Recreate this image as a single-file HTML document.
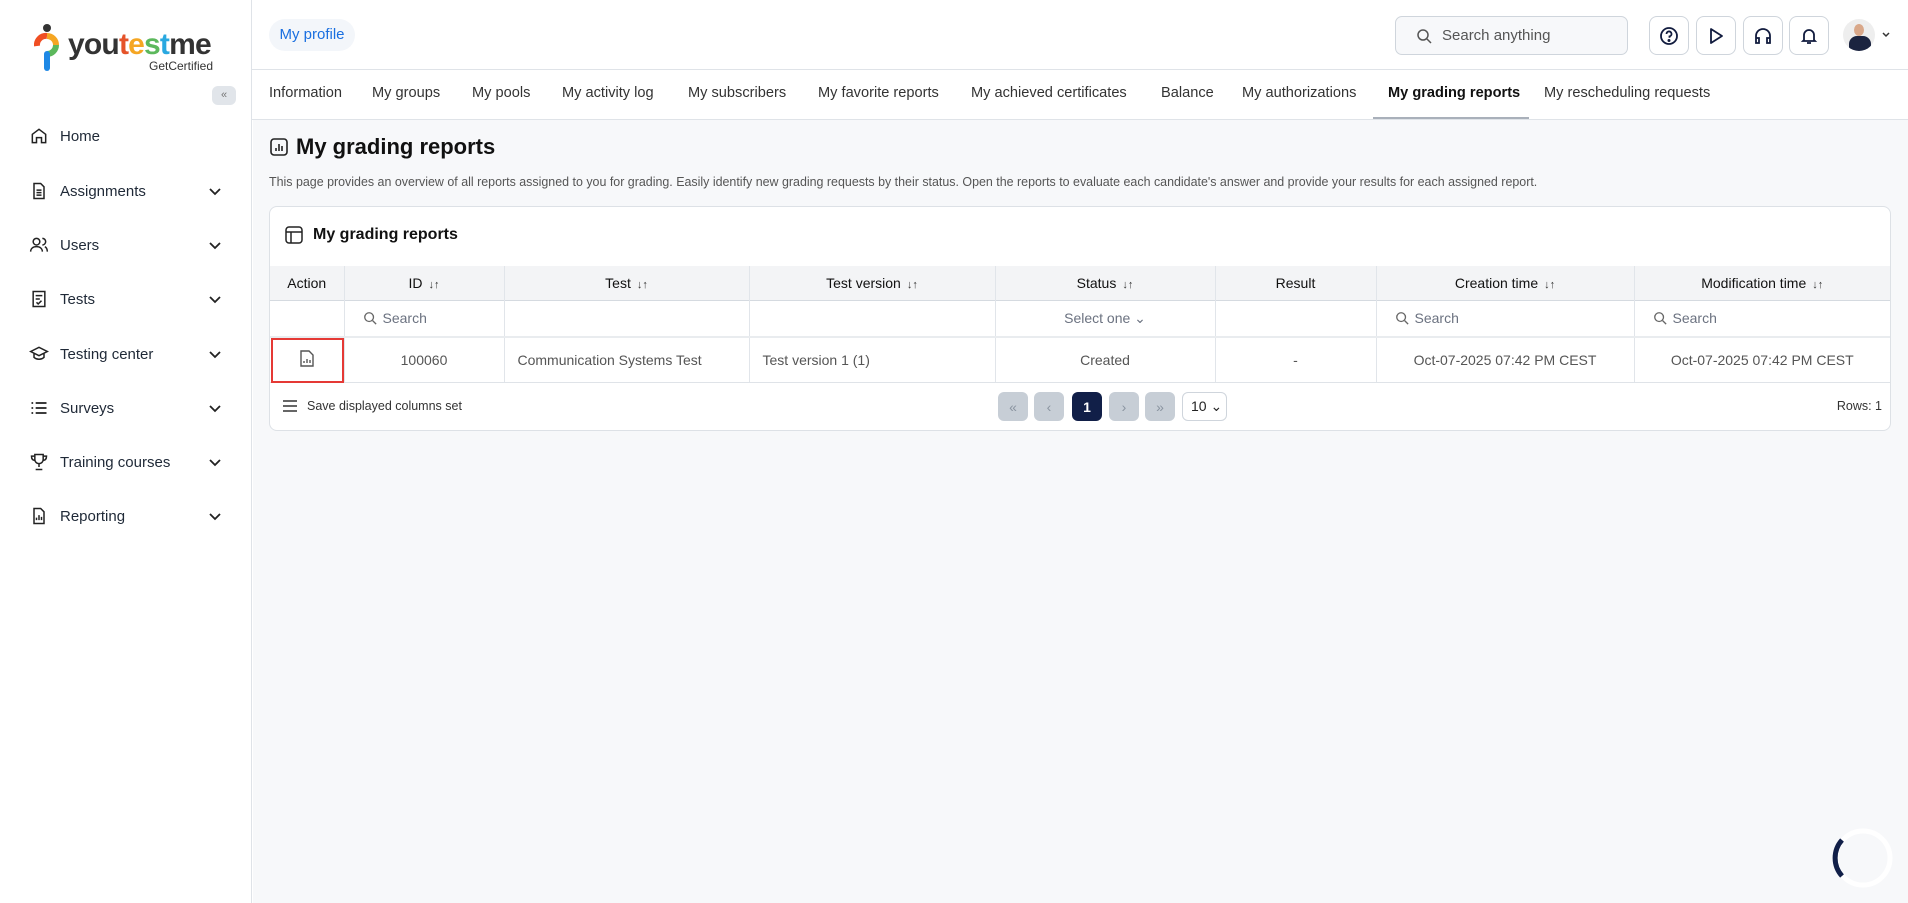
<!DOCTYPE html>
<html><head><meta charset="utf-8"><style>
*{box-sizing:border-box;margin:0;padding:0}
body{width:1908px;height:903px;overflow:hidden;background:#fff;font-family:"Liberation Sans",sans-serif;color:#1f2937;position:relative}
.abs{position:absolute}
.side{left:0;top:0;width:252px;height:903px;background:#fff;border-right:1px solid #dfe3e8}
.nav{left:0;width:252px;height:40px;display:flex;align-items:center;font-size:15px;color:#1f2937}
.nav svg.ic{position:absolute;left:29px}
.nav span{position:absolute;left:60px}
.nav .chev{position:absolute;left:207px}
.hdr{left:252px;top:0;right:0;height:70px;border-bottom:1px solid #dfe3e8;background:#fff}
.tabs{left:252px;top:70px;right:0;height:50px;border-bottom:1px solid #dfe3e8;background:#fff}
.tab{position:absolute;top:15px;font-size:14.6px;color:#333}
.main{left:253px;top:120px;right:0;bottom:0;background:#f7f8fa}
.ibtn{position:absolute;top:16px;width:40px;height:39px;border:1px solid #cfd5dc;border-radius:8px;background:#fff;display:flex;align-items:center;justify-content:center}
.card{left:269px;top:206px;width:1622px;height:225px;background:#fff;border:1px solid #dde1e6;border-radius:8px}
table{border-collapse:collapse;position:absolute;left:0;top:59px;width:1620px;font-size:14px;table-layout:fixed}
td,th{border-right:1px solid #e1e5ea;text-align:center;font-weight:normal;color:#374151}
th{height:34px;background:#f3f4f6;color:#111;font-size:14px}
tr.f td{height:37px;border-top:1px solid #d5dae0;color:#6b7280}
tr.d td{height:45px;border-top:2px solid #e9ecef;border-bottom:1px solid #dfe3e8;color:#555}
td:last-child,th:last-child{border-right:none}
.srt{font-size:11px;margin-left:6px;color:#333}
.srch{text-align:left;padding-left:18px}
.srch svg{vertical-align:-2px;margin-right:6px}
.pg{position:absolute;top:185px;width:30px;height:29px;border-radius:6px;background:#c7ced6;color:#8a94a0;display:flex;align-items:center;justify-content:center;font-size:14px}
</style></head><body>
<div class="abs side">
  <svg class="abs" style="left:34px;top:24px" width="26" height="50" viewBox="0 0 26 50">
    <circle cx="13" cy="4" r="4" fill="#333"/>
    <path d="M3 22 A9 9 0 0 1 13 12" stroke="#f04e23" stroke-width="6" fill="none"/>
    <path d="M13 12 A9 9 0 0 1 22 21" stroke="#f5a623" stroke-width="6" fill="none"/>
    <path d="M22 21 A9 9 0 0 1 13 30" stroke="#5cb85c" stroke-width="6" fill="none"/>
    <path d="M13 30 L13 44" stroke="#1e88e5" stroke-width="6" stroke-linecap="round"/>
  </svg>
  <div class="abs" style="left:68px;top:28px;font-size:30px;font-weight:bold;letter-spacing:-0.8px;color:#333">you<span style="color:#e5532a">t</span><span style="color:#f5a623">e</span><span style="color:#5cb85c">s</span><span style="color:#29a8e0">t</span>me</div>
  <div class="abs" style="left:149px;top:59px;font-size:12px;color:#333">GetCertified</div>
  <div class="abs" style="left:212px;top:86px;width:24px;height:19px;border-radius:6px;background:#e1e5ea;font-size:11px;color:#777;text-align:center;line-height:19px">«</div>
  <div class="abs nav" style="top:116px"><svg class="ic" width="20" height="20" viewBox="0 0 24 24" fill="none" stroke="#222" stroke-width="1.8"><path d="M4 10l8-6 8 6v10h-5v-6H9v6H4z"/></svg><span>Home</span></div>
  <div class="abs nav" style="top:171px"><svg class="ic" width="20" height="20" viewBox="0 0 24 24" fill="none" stroke="#222" stroke-width="1.8"><path d="M6 3h8l4 4v14H6z M9 11h6 M9 14h6 M9 17h6"/></svg><span>Assignments</span><svg class="chev" width="16" height="16" viewBox="0 0 16 16" fill="none" stroke="#222" stroke-width="1.8"><path d="M3 6l5 5 5-5"/></svg></div>
  <div class="abs nav" style="top:225px"><svg class="ic" width="20" height="20" viewBox="0 0 24 24" fill="none" stroke="#222" stroke-width="1.8"><circle cx="9" cy="8" r="4"/><path d="M2 20c0-4 3-6 7-6s7 2 7 6 M16 4a4 4 0 0 1 0 8 M19 14c2 1 3 3 3 6"/></svg><span>Users</span><svg class="chev" width="16" height="16" viewBox="0 0 16 16" fill="none" stroke="#222" stroke-width="1.8"><path d="M3 6l5 5 5-5"/></svg></div>
  <div class="abs nav" style="top:279px"><svg class="ic" width="20" height="20" viewBox="0 0 24 24" fill="none" stroke="#222" stroke-width="1.8"><path d="M5 3h14v18H5z M8 8h8 M8 12h5 M9 16l2 2 4-4"/></svg><span>Tests</span><svg class="chev" width="16" height="16" viewBox="0 0 16 16" fill="none" stroke="#222" stroke-width="1.8"><path d="M3 6l5 5 5-5"/></svg></div>
  <div class="abs nav" style="top:334px"><svg class="ic" width="20" height="20" viewBox="0 0 24 24" fill="none" stroke="#222" stroke-width="1.8"><path d="M2 9l10-5 10 5-10 5z M6 11v5c3 3 9 3 12 0v-5"/></svg><span>Testing center</span><svg class="chev" width="16" height="16" viewBox="0 0 16 16" fill="none" stroke="#222" stroke-width="1.8"><path d="M3 6l5 5 5-5"/></svg></div>
  <div class="abs nav" style="top:388px"><svg class="ic" width="20" height="20" viewBox="0 0 24 24" fill="none" stroke="#222" stroke-width="2"><path d="M3 6h2 M8 6h13 M3 12h2 M8 12h13 M3 18h2 M8 18h13"/></svg><span>Surveys</span><svg class="chev" width="16" height="16" viewBox="0 0 16 16" fill="none" stroke="#222" stroke-width="1.8"><path d="M3 6l5 5 5-5"/></svg></div>
  <div class="abs nav" style="top:442px"><svg class="ic" width="20" height="20" viewBox="0 0 24 24" fill="none" stroke="#222" stroke-width="1.8"><path d="M7 3h10v6a5 5 0 0 1-10 0z M7 5H3c0 4 2 5 4 5 M17 5h4c0 4-2 5-4 5 M12 14v4 M8 21h8"/></svg><span>Training courses</span><svg class="chev" width="16" height="16" viewBox="0 0 16 16" fill="none" stroke="#222" stroke-width="1.8"><path d="M3 6l5 5 5-5"/></svg></div>
  <div class="abs nav" style="top:496px"><svg class="ic" width="20" height="20" viewBox="0 0 24 24" fill="none" stroke="#222" stroke-width="1.8"><path d="M6 3h8l4 4v14H6z M9 17v-3 M12 17v-6 M15 17v-4"/></svg><span>Reporting</span><svg class="chev" width="16" height="16" viewBox="0 0 16 16" fill="none" stroke="#222" stroke-width="1.8"><path d="M3 6l5 5 5-5"/></svg></div>
</div>
<div class="abs hdr">
  <div class="abs" style="left:17px;top:19px;width:86px;height:32px;border-radius:16px;background:#f3f6fa;color:#1a6fe0;font-size:15px;text-align:center;line-height:32px">My profile</div>
  <div class="abs" style="left:1143px;top:16px;width:233px;height:39px;border:1px solid #cfd5dc;border-radius:7px;background:#f7f8fa"><svg class="abs" style="left:20px;top:11px" width="16" height="16" viewBox="0 0 16 16" fill="none" stroke="#555" stroke-width="1.5"><circle cx="7" cy="7" r="5"/><path d="M11 11l4 4"/></svg><span class="abs" style="left:46px;top:10px;font-size:15px;color:#555">Search anything</span></div>
  <div class="ibtn" style="left:1397px"><svg width="20" height="20" viewBox="0 0 20 20" fill="none" stroke="#111b3e" stroke-width="1.8"><circle cx="10" cy="10" r="8"/><path d="M7.5 8a2.5 2.5 0 1 1 3 2.4v1.4"/><circle cx="10" cy="14.5" r=".6" fill="#111b3e"/></svg></div>
  <div class="ibtn" style="left:1444px"><svg width="20" height="20" viewBox="0 0 20 20" fill="none" stroke="#111b3e" stroke-width="1.8"><path d="M5 3l11 7-11 7z" stroke-linejoin="round"/></svg></div>
  <div class="ibtn" style="left:1491px"><svg width="20" height="20" viewBox="0 0 20 20" fill="none" stroke="#111b3e" stroke-width="1.8"><path d="M3 14v-4a7 7 0 0 1 14 0v4 M3 12h3v5H3z M14 12h3v5h-3z"/></svg></div>
  <div class="ibtn" style="left:1537px"><svg width="20" height="20" viewBox="0 0 20 20" fill="none" stroke="#111b3e" stroke-width="1.8"><path d="M5 14V9a5 5 0 0 1 10 0v5l1 1H4z M8 17h4"/></svg></div>
  <div class="abs" style="left:1591px;top:19px;width:32px;height:32px;border-radius:50%;background:#eee;overflow:hidden"><div class="abs" style="left:11px;top:5px;width:10px;height:12px;border-radius:50%;background:#d9a88a"></div><div class="abs" style="left:6px;top:17px;width:22px;height:20px;border-radius:8px 8px 0 0;background:#1b2440"></div></div>
  <svg class="abs" style="left:1629px;top:31px" width="10" height="8" viewBox="0 0 10 8" fill="none" stroke="#333" stroke-width="1.5"><path d="M2 2l3 3 3-3"/></svg>
</div>
<div class="abs tabs">
  <div class="tab" style="left:17px">Information</div>
  <div class="tab" style="left:120px">My groups</div>
  <div class="tab" style="left:220px">My pools</div>
  <div class="tab" style="left:310px">My activity log</div>
  <div class="tab" style="left:436px">My subscribers</div>
  <div class="tab" style="left:566px">My favorite reports</div>
  <div class="tab" style="left:719px">My achieved certificates</div>
  <div class="tab" style="left:909px">Balance</div>
  <div class="tab" style="left:990px">My authorizations</div>
  <div class="tab" style="left:1136px;font-weight:bold;color:#111">My grading reports</div>
  <div class="abs" style="left:1121px;top:47px;width:156px;height:2px;background:#a9b0ba"></div>
  <div class="tab" style="left:1292px">My rescheduling requests</div>
</div>
<div class="abs main"></div>
<svg class="abs" style="left:269px;top:137px" width="20" height="20" viewBox="0 0 20 20" fill="none" stroke="#222" stroke-width="1.6"><rect x="2" y="2" width="16" height="16" rx="3"/><path d="M7 14v-3 M10 14V7 M13 14v-5"/></svg>
<div class="abs" style="left:296px;top:134px;font-size:22px;font-weight:bold;color:#111">My grading reports</div>
<div class="abs" style="left:269px;top:175px;font-size:12.45px;color:#555">This page provides an overview of all reports assigned to you for grading. Easily identify new grading requests by their status. Open the reports to evaluate each candidate's answer and provide your results for each assigned report.</div>
<div class="abs card">
  <svg class="abs" style="left:15px;top:19px" width="18" height="18" viewBox="0 0 18 18" fill="none" stroke="#222" stroke-width="1.5"><rect x="1" y="1" width="16" height="16" rx="3"/><path d="M1 6h16 M6 6v11"/></svg>
  <div class="abs" style="left:43px;top:19px;font-size:16px;font-weight:bold;color:#111">My grading reports</div>
  <table>
    <colgroup><col style="width:74px"><col style="width:160px"><col style="width:245px"><col style="width:246px"><col style="width:220px"><col style="width:161px"><col style="width:258px"><col style="width:256px"></colgroup>
    <tr><th>Action</th><th>ID<span class="srt">↓↑</span></th><th>Test<span class="srt">↓↑</span></th><th>Test version<span class="srt">↓↑</span></th><th>Status<span class="srt">↓↑</span></th><th>Result</th><th>Creation time<span class="srt">↓↑</span></th><th>Modification time<span class="srt">↓↑</span></th></tr>
    <tr class="f"><td></td><td class="srch"><svg width="14" height="14" viewBox="0 0 16 16" fill="none" stroke="#666" stroke-width="1.5"><circle cx="7" cy="7" r="5"/><path d="M11 11l4 4"/></svg>Search</td><td></td><td></td><td>Select one ⌄</td><td></td><td class="srch"><svg width="14" height="14" viewBox="0 0 16 16" fill="none" stroke="#666" stroke-width="1.5"><circle cx="7" cy="7" r="5"/><path d="M11 11l4 4"/></svg>Search</td><td class="srch"><svg width="14" height="14" viewBox="0 0 16 16" fill="none" stroke="#666" stroke-width="1.5"><circle cx="7" cy="7" r="5"/><path d="M11 11l4 4"/></svg>Search</td></tr>
    <tr class="d"><td style="position:relative"><div class="abs" style="left:1px;top:0;width:73px;height:45px;border:2px solid #e53935"></div><svg width="16" height="18" viewBox="0 0 16 18" fill="none" stroke="#555" stroke-width="1.4"><path d="M2 2h8l4 4v11H2z M5 14v-2 M8 14v-4 M11 14v-3"/></svg></td><td>100060</td><td style="text-align:left;padding-left:13px">Communication Systems Test</td><td style="text-align:left;padding-left:13px">Test version 1 (1)</td><td>Created</td><td>-</td><td>Oct-07-2025 07:42 PM CEST</td><td>Oct-07-2025 07:42 PM CEST</td></tr>
  </table>
  <svg class="abs" style="left:12px;top:192px" width="16" height="14" viewBox="0 0 16 14" fill="none" stroke="#333" stroke-width="1.6"><path d="M1 2h14 M1 7h14 M1 12h14"/></svg>
  <div class="abs" style="left:37px;top:192px;font-size:12.5px;color:#333">Save displayed columns set</div>
  <div class="pg" style="left:728px">«</div>
  <div class="pg" style="left:764px">‹</div>
  <div class="pg" style="left:802px;background:#111f48;color:#fff;font-weight:bold">1</div>
  <div class="pg" style="left:839px">›</div>
  <div class="pg" style="left:875px">»</div>
  <div class="abs" style="left:912px;top:185px;width:45px;height:29px;border:1px solid #cfd5dc;border-radius:6px;font-size:14px;line-height:27px;padding-left:8px;color:#222">10 ⌄</div>
  <div class="abs" style="right:8px;top:192px;font-size:12.5px;color:#333">Rows: 1</div>
</div>
<svg class="abs" style="left:1828px;top:826px" width="70" height="64" viewBox="0 0 70 64" fill="none" stroke-width="5"><circle cx="35" cy="32" r="27" stroke="#fff"/><path d="M14 14 A27 27 0 0 0 14 50" stroke="#111f48"/></svg>
</body></html>
